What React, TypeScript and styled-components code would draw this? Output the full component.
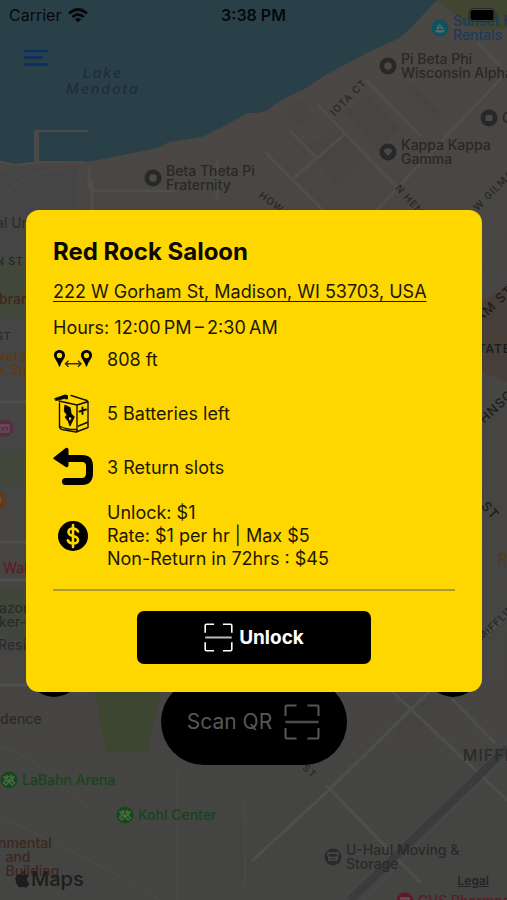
import React from "react";
import styled, { createGlobalStyle } from "styled-components";

const GlobalStyle = createGlobalStyle`
  *, *::before, *::after { box-sizing: border-box; }
  body { margin: 0; background: #454544; font-family: Inter, "Liberation Sans", sans-serif; }
  button { font: inherit; border: 0; padding: 0; cursor: pointer; }
`;

const Screen = styled.main`
  position: relative;
  display: flex;
  flex-direction: column;
  min-height: 100vh;
  overflow: hidden;
`;

const MapLayer = styled.div`
  position: absolute;
  inset: 0;
  overflow: hidden;
`;

const MapDrawing = styled.svg`
  display: block;
  width: 100%;
  height: 100%;
`;

const Place = styled.div<{ $x: number; $y: number; $color: string }>`
  position: absolute;
  left: ${(p) => p.$x}px;
  top: ${(p) => p.$y}px;
  display: flex;
  align-items: center;
  gap: 4px;
  color: ${(p) => p.$color};
  font-size: 14px;
  font-weight: 500;
  line-height: 14px;
  white-space: pre;
`;

const Pin = styled.svg`
  flex: none;
  width: 18px;
  height: 18px;
`;

const Water = styled.div`
  position: absolute;
  left: 66px;
  top: 65px;
  color: #1e2c3c;
  font-size: 14px;
  font-style: italic;
  font-weight: 500;
  line-height: 16px;
  letter-spacing: 2px;
  text-align: center;
`;

const Street = styled.span<{ $x: number; $y: number; $angle: number; $color?: string; $size?: number }>`
  position: absolute;
  left: ${(p) => p.$x}px;
  top: ${(p) => p.$y}px;
  transform: translate(-50%, -50%) rotate(${(p) => p.$angle}deg);
  color: ${(p) => p.$color ?? "#262626"};
  font-size: ${(p) => p.$size ?? 10}px;
  font-weight: 500;
  line-height: 14px;
  letter-spacing: 1px;
  white-space: nowrap;
`;

const Brand = styled.div`
  position: absolute;
  left: 15px;
  top: 868px;
  display: flex;
  align-items: center;
  gap: 1px;
  color: #1d1d1d;
  font-size: 20px;
  font-weight: 500;
  line-height: 22px;
`;

const Legal = styled.a`
  position: absolute;
  right: 18px;
  top: 873px;
  color: #252525;
  font-size: 12px;
  font-weight: 600;
  line-height: 16px;
`;

const StatusBar = styled.header`
  position: relative;
  display: grid;
  grid-template-columns: 1fr auto 1fr;
  align-items: center;
  height: 30px;
  padding: 0 9px;
  color: #06090a;
  font-size: 16px;
  line-height: 20px;
`;

const Carrier = styled.div`
  display: flex;
  align-items: center;
  gap: 7px;
`;

const Clock = styled.time`
  font-weight: 600;
`;

const Battery = styled.svg`
  justify-self: end;
  width: 30px;
  height: 14px;
`;

const MenuButton = styled.button`
  position: relative;
  align-self: flex-start;
  margin: 18px 0 0 24px;
  width: 24px;
  height: 20px;
  background: none;
`;

const Dock = styled.footer`
  position: relative;
  display: flex;
  justify-content: space-between;
  align-items: flex-end;
  min-height: 124px;
  margin-top: auto;
  margin-bottom: 135px;
  padding: 0 26px;
`;

const RoundButton = styled.button`
  align-self: flex-start;
  width: 56px;
  height: 56px;
  border-radius: 50%;
  background: #000;
`;

const ScanButton = styled.button`
  display: flex;
  align-items: center;
  justify-content: center;
  gap: 12px;
  width: 186px;
  height: 86px;
  border-radius: 43px;
  background: #000;
  color: #575757;
  font-size: 21px;
  line-height: 28px;
`;

const Overlay = styled.div`
  position: absolute;
  inset: 0;
  display: flex;
  align-items: center;
  justify-content: center;
  padding: 2px 25px 0 26px;
`;

const Card = styled.section`
  width: 100%;
  max-width: 560px;
  padding: 28px 27px;
  border-radius: 13px;
  background: #ffd700;
  color: #1c1800;
  font-size: 18px;
  line-height: 23px;
`;

const Title = styled.h1`
  margin: 0 0 14px;
  color: #0b0900;
  font-size: 24px;
  font-weight: 700;
  line-height: 28px;
`;

const Address = styled.a`
  display: block;
  margin-bottom: 13px;
  color: inherit;
  text-underline-offset: 3px;
  text-decoration-thickness: 1px;
`;

const Hours = styled.p`
  margin: 0 0 8px;
`;

const Facts = styled.ul`
  display: grid;
  gap: 14px;
  margin: 0;
  padding: 0;
  list-style: none;

  & > li:first-child { margin-bottom: 8px; }
`;

const Fact = styled.li<{ $compact?: boolean }>`
  display: grid;
  grid-template-columns: 40px 1fr;
  align-items: center;
  gap: 14px;
  min-height: ${(p) => (p.$compact ? 24 : 40)}px;
`;

const Icon = styled.svg<{ $w: number; $h: number }>`
  display: block;
  flex: none;
  justify-self: center;
  width: ${(p) => p.$w}px;
  height: ${(p) => p.$h}px;
`;

const Divider = styled.hr`
  height: 2px;
  margin: 19px 0 20px;
  border: 0;
  background: #b09a35;
`;

const UnlockButton = styled.button`
  display: flex;
  align-items: center;
  justify-content: center;
  gap: 6px;
  width: 234px;
  max-width: 100%;
  height: 53px;
  margin: 0 auto;
  border-radius: 7px;
  background: #000;
  color: #fff;
  font-size: 19px;
  font-weight: 700;
  line-height: 24px;
`;

function ScanIcon({ size, color, bar }: { size: number; color: string; bar: string }) {
  return (
    <Icon $w={size} $h={size} viewBox="0 0 36 36" fill="none" strokeWidth="2" stroke={color} aria-hidden="true">
      <path d="M1.500 12V3Q1.500 1.500 3 1.500H12.500M23.500 1.500H33Q34.500 1.500 34.500 3V12M34.500 24V33Q34.500 34.500 33 34.500H23.500M12.500 34.500H3Q1.500 34.500 1.500 33V24" />
      <path d="M1.500 18H34.500" stroke={bar} strokeWidth="2.500" />
    </Icon>
  );
}

type PinKind = "round" | "square" | "heart" | "boat" | "arena" | "truck" | "bag" | "food";

function PlacePin({ kind, color }: { kind: PinKind; color: string }) {
  return (
    <Pin viewBox="0 0 18 18" aria-hidden="true">
      <circle cx="9" cy="9" r="8.500" fill={color} />
      {kind === "round" && <circle cx="9" cy="9" r="3.800" fill="#4b4947" />}
      {kind === "square" && <rect x="5.500" y="6" width="7" height="6" rx="1.500" fill="#4b4947" />}
      {kind === "heart" && <path d="M9 13L5 8.500Q5 5 9 5.500Q13 5 13 8.500Z" fill="#4b4947" />}
      {kind === "boat" && <path d="M4 11H14L12.500 13.500H5.500ZM8.500 4V10H5ZM9.500 5L13 10H9.500Z" fill="#4d6d75" />}
      {kind === "arena" && (
        <g fill="none" stroke="#4a6946" strokeWidth="1.400">
          <path d="M4 6H8L6 9ZM14 6H10L12 9ZM6 9L3.500 12L6 14L8.500 11ZM12 9L14.500 12L12 14L9.500 11ZM7.500 5L6 4M10.500 5L12 4M8 8L9 10L10 8" />
        </g>
      )}
      {kind === "truck" && <path d="M4 8V5H14V8M4 9.500H14M5 13V8M13 13V8M5 12H13" fill="none" stroke="#4b4b4a" strokeWidth="1.300" />}
      {kind === "bag" && <path d="M5 7H13V13H5ZM4 6H14M8 9V12M10 9V12" fill="none" stroke="#65505a" strokeWidth="1.300" />}
      {kind === "food" && <path d="M4 9H13M6 7Q9 4 12 7M6 11H12" fill="none" stroke="#6a5747" strokeWidth="1.500" />}
    </Pin>
  );
}

interface PlaceData {
  x: number;
  y: number;
  text: string;
  color: string;
  kind?: PinKind;
  pin?: string;
}

const grey = "#282828";
const places: PlaceData[] = [
  { x: 431, y: 14, text: "Sunset Bay\nRentals", color: "#193b5e", kind: "boat", pin: "#11515d" },
  { x: 379, y: 52, text: "Pi Beta Phi\nWisconsin Alpha", color: grey, kind: "round", pin: grey },
  { x: 480, y: 109, text: "Chi Phi", color: grey, kind: "square", pin: grey },
  { x: 379, y: 138, text: "Kappa Kappa\nGamma", color: grey, kind: "heart", pin: grey },
  { x: 144, y: 164, text: "Beta Theta Pi\nFraternity", color: grey, kind: "round", pin: grey },
  { x: -4, y: 216, text: "al Union", color: "#302d29" },
  { x: -1, y: 292, text: "brary", color: "#40261c" },
  { x: -2, y: 349, text: "vers\nx Store", color: "#5c3a13" },
  { x: -4, y: 419, text: "", color: grey, kind: "bag", pin: "#592a43" },
  { x: -11, y: 491, text: "", color: grey, kind: "food", pin: "#623a19" },
  { x: 3, y: 561, text: "Walgreens", color: "#591e22" },
  { x: -1, y: 601, text: "azon\nker-on", color: "#2b2b2a" },
  { x: -2, y: 638, text: "Residence", color: "#2b2b2a" },
  { x: 0, y: 712, text: "dence", color: "#2b2b2b" },
  { x: 0, y: 771, text: "LaBahn Arena", color: "#16441c", kind: "arena", pin: "#14491a" },
  { x: 116, y: 806, text: "Kohl Center", color: "#16441c", kind: "arena", pin: "#14491a" },
  { x: -2, y: 836, text: "nmental\n  and\n  Building", color: "#3d261e" },
  { x: 324, y: 843, text: "U-Haul Moving &\nStorage", color: "#292a2a", kind: "truck", pin: "#292a2a" },
  { x: 498, y: 552, text: "Red", color: "#573818" },
  { x: 396, y: 892, text: "CVS Pharmacy", color: "#591c26", kind: "bag", pin: "#601926" },
];

function CityMap() {
  return (
    <MapLayer>
      <MapDrawing viewBox="0 0 507 900" preserveAspectRatio="xMidYMid slice" aria-hidden="true">
        <defs>
          <linearGradient id="land" x1="0" y1="0" x2="0" y2="1">
            <stop offset="0" stopColor="#4b4743" />
            <stop offset="0.300" stopColor="#484644" />
            <stop offset="1" stopColor="#444442" />
          </linearGradient>
        </defs>
        <rect width="507" height="900" fill="url(#land)" />
        <path d="M0 174Q15 164 40 167L78 168V500H0Z" fill="#464545" />
        <path d="M0 262H27V318H0ZM0 452H27V488H0Z" fill="#41473a" />
        <path d="M94 690H161L148 752H106Z" fill="#3c4631" />
        <path d="M0 588H27V640Q12 646 0 632Z" fill="#40463a" />
        <path d="M437 0H507V28Q475 36 458 17Z" fill="#414630" />
        <path d="M482 302L507 287V382L482 372Z" fill="#463f39" />
        <path d="M0 0H437C421 17 413 27 399 38C386 45 373 49 361 56L324 76L303 90Q280 99 268 110C259 114 254 113 248 113L209 134L201 137L169 142L158 148L98 160L84 162L40 161L16 164L0 161Z" fill="#2a4048" />
        <path d="M34 161V130H88V132H39V161Z" fill="#484a47" />
        <path d="M0 162L16 165L40 162H84" fill="none" stroke="#514c47" strokeWidth="1.500" />
        <g fill="#434241" opacity="0.300">
          <path d="M405 88L412 83L442 114L436 121ZM344 112L368 94L401 128L378 150ZM306 148L337 126L366 158L339 188ZM285 111L299 99L313 114L300 127Z" />
          <path d="M190 850L243 820V880H190ZM390 715L430 695L440 713L400 740ZM291 792L316 776L325 789L296 812ZM377 817L405 788L412 795L388 824Z" />
        </g>
        <g fill="none" stroke="#4e4e4c" strokeWidth="3" strokeLinecap="round">
          <path d="M319 106L397 188M367 81L420 135M294 178L345 134M266 153L327 214M373 214L507 72M291 132L315 156M478 43L499 65" />
          <path d="M253 860L330 789L507 615M327 786L420 882M380 680L507 800M453 700L494 742" />
          <path d="M94 191H175M92 214V180M89 168V187M217 160V200M0 402H27M0 542H27M0 580H27M0 685H27" />
        </g>
        <path d="M507 748L350 900" stroke="#3a3b3b" strokeWidth="8" fill="none" />
        <path d="M507 742L345 898M507 756L363 900" stroke="#4a4b4a" strokeWidth="1" fill="none" />
        <path d="M0 747Q30 754 64 787L90 810M0 817Q75 850 160 900M177 770V900M184 800H245V888M0 193Q12 192 15 185Q35 170 69 168" stroke="#4a4a44" strokeWidth="1.500" fill="none" />
      </MapDrawing>

      <Water>Lake<br />Mendota</Water>
      <Street $x={348} $y={97} $angle={-45}>IOTA CT</Street>
      <Street $x={281} $y={209} $angle={38}>HOWARD</Street>
      <Street $x={415} $y={205} $angle={48}>N HENRY</Street>
      <Street $x={496} $y={187} $angle={-45}>W GILMAN</Street>
      <Street $x={10} $y={261} $angle={0}>N ST</Street>
      <Street $x={4} $y={336} $angle={0}>ST</Street>
      <Street $x={490} $y={307} $angle={-43} $size={13} $color="#1c1c1c">HAM ST</Street>
      <Street $x={490} $y={349} $angle={0} $size={12} $color="#191919">STATE</Street>
      <Street $x={493} $y={409} $angle={-43} $size={13} $color="#1c1c1c">JOHNSON</Street>
      <Street $x={486} $y={505} $angle={48} $size={13} $color="#1c1c1c">R ST</Street>
      <Street $x={496} $y={622} $angle={-44}>MIFFLIN</Street>
      <Street $x={310} $y={771} $angle={45}>ST</Street>
      <Street $x={498} $y={755} $angle={0} $size={16} $color="#2b2b2b">MIFFLIN</Street>
      {places.map((p, i) => (
        <Place key={i} $x={p.x} $y={p.y} $color={p.color}>
          {p.kind && <PlacePin kind={p.kind} color={p.pin ?? p.color} />}
          <span>{p.text}</span>
        </Place>
      ))}
      <Brand>
        <Icon $w={15} $h={18} viewBox="0 0 15 18" fill="currentColor" aria-hidden="true">
          <path d="M10.300 0Q10.400 3.300 7.200 4Q7 1 10.300 0ZM7.600 5Q9 3.900 11 4.200Q13 4.400 14 6Q11.800 7.200 12 9.500Q12.200 12 14.500 13Q12.500 17.400 10.700 17.500Q9.500 17.500 8.500 16.900Q7.500 16.500 6.400 17Q4.700 17.900 3.500 16.700Q.2 13 .4 9Q.7 4.500 4.300 4.200Q6 4.200 7.600 5Z" />
        </Icon>
        Maps
      </Brand>
      <Legal href="#legal">Legal</Legal>
    </MapLayer>
  );
}

function DistanceIcon() {
  return (
    <Icon $w={40} $h={20} viewBox="0 0 40 20" aria-hidden="true">
      <path fillRule="evenodd" d="M6.500 1C3.200 1 1 3.300 1 6.300C1 9.700 4.500 12 6 17.500H7C8.500 12 12 9.700 12 6.300C12 3.300 9.800 1 6.500 1ZM6.500 3.800A2.700 2.700 0 1 1 6.500 9.200A2.700 2.700 0 0 1 6.500 3.800Z" />
      <path fillRule="evenodd" d="M33.500 1C30.200 1 28 3.300 28 6.300C28 9.700 31.500 12 33 17.500H34C35.500 12 39 9.700 39 6.300C39 3.300 36.800 1 33.500 1ZM33.500 3.800A2.700 2.700 0 1 1 33.500 9.200A2.700 2.700 0 0 1 33.500 3.800Z" />
      <path d="M12.500 14.700H28M15.500 11.700L12.500 14.700L15.500 17.700M25 11.700L28 14.700L25 17.700" fill="none" stroke="#3b3200" strokeWidth="1.500" />
    </Icon>
  );
}

function BatteriesIcon() {
  return (
    <Icon $w={40} $h={40} viewBox="0 0 40 40" fill="none" stroke="#151100" strokeWidth="1.400" strokeLinejoin="round" strokeLinecap="round" aria-hidden="true">
      <path d="M2 5.500L12 2L14.500 2.500V6L11 5.500L3 7.500Z" fill="#000" strokeWidth="1" />
      <path d="M18 2.500L34 7.500V9L24 12L6 8M6.500 10V34Q7 36 9 36.500L23 39L35 34.500V8.500M24 12V39M25.500 33L34 29.500M6.500 33Q12 36.500 23 36.500M24 12L35 8.500" />
      <path d="M29.500 14.500V21M26.500 18.500L33 16.500" strokeWidth="2" />
      <path d="M12 12.500L17 15L18 21L21 24L17 32.500L15.500 28L12.500 24L14.500 22L11.500 18Z" fill="#000" />
      <path d="M16.500 24L18.500 25L17 28L15.800 26Z" fill="#ffd700" stroke="none" />
    </Icon>
  );
}

function ReturnIcon() {
  return (
    <Icon $w={40} $h={40} viewBox="0 0 40 40" aria-hidden="true">
      <path d="M12 11.500H29Q36.500 11.500 36.500 19V26Q36.500 34.500 29 34.500H12.500" fill="none" stroke="#000" strokeWidth="7" strokeLinecap="round" />
      <path d="M.7 10.500L12.700 1Q15.500 0 15.500 3V18Q15.500 21 12.700 20L.7 12Q-.3 11.300 .7 10.500Z" />
    </Icon>
  );
}

function DollarIcon() {
  return (
    <Icon $w={30} $h={30} viewBox="0 0 30 30" aria-hidden="true">
      <circle cx="15" cy="15" r="15" />
      <path d="M20 10.500Q18.500 7.500 15 7.500Q10.500 7.500 10.500 11Q10.500 14 15 15Q20 16 20 19Q20 22.500 15 22.500Q11 22.500 9.800 19.300M15 4V26" fill="none" stroke="#ffd700" strokeWidth="2.600" strokeLinecap="round" />
    </Icon>
  );
}

export default function App() {
  return (
    <>
      <GlobalStyle />
      <Screen>
        <CityMap />
        <StatusBar>
          <Carrier>
            Carrier
            <Icon $w={20} $h={15} viewBox="0 0 20 15" fill="none" stroke="currentColor" strokeWidth="2.800" aria-label="Wi-Fi">
              <path d="M1 5.500Q10-2.500 19 5.500M4.300 9Q10 4 15.700 9" />
              <path d="M10 14.500L6.700 11.300Q10 8.800 13.300 11.300Z" fill="currentColor" stroke="none" />
            </Icon>
          </Carrier>
          <Clock dateTime="15:38">3:38 PM</Clock>
          <Battery viewBox="0 0 30 14" aria-label="Battery full">
            <rect x="1" y=".5" width="26" height="13" rx="3.500" fill="none" stroke="#292d25" />
            <rect x="2.500" y="2" width="23" height="10" rx="2" />
            <path d="M28.500 5Q30 7 28.500 9Z" fill="#252821" />
          </Battery>
        </StatusBar>
        <MenuButton aria-label="Menu">
          <Icon $w={24} $h={20} viewBox="0 0 24 20" stroke="#0a2d63" strokeWidth="2.500" aria-hidden="true">
            <path d="M0 3H24M0 9.500H19M0 16.500H24" />
          </Icon>
        </MenuButton>
        <Dock>
          <RoundButton aria-label="My location" />
          <ScanButton>
            Scan QR
            <ScanIcon size={36} color="#575757" bar="#4c4c4c" />
          </ScanButton>
          <RoundButton aria-label="Support" />
        </Dock>
        <Overlay>
          <Card role="dialog" aria-labelledby="station-name">
            <Title id="station-name">Red Rock Saloon</Title>
            <Address href="#directions">222 W Gorham St, Madison, WI 53703, USA</Address>
            <Hours>Hours: 12:00&#8201;PM&#8201;–&#8201;2:30&#8201;AM</Hours>
            <Facts>
              <Fact $compact><DistanceIcon /><span>808 ft</span></Fact>
              <Fact><BatteriesIcon /><span>5 Batteries left</span></Fact>
              <Fact><ReturnIcon /><span>3 Return slots</span></Fact>
              <Fact><DollarIcon /><span>Unlock: $1<br />Rate: $1 per hr | Max $5<br />Non-Return in 72hrs : $45</span></Fact>
            </Facts>
            <Divider />
            <UnlockButton>
              <ScanIcon size={29} color="#fff" bar="#bdb8c2" />
              Unlock
            </UnlockButton>
          </Card>
        </Overlay>
      </Screen>
    </>
  );
}
